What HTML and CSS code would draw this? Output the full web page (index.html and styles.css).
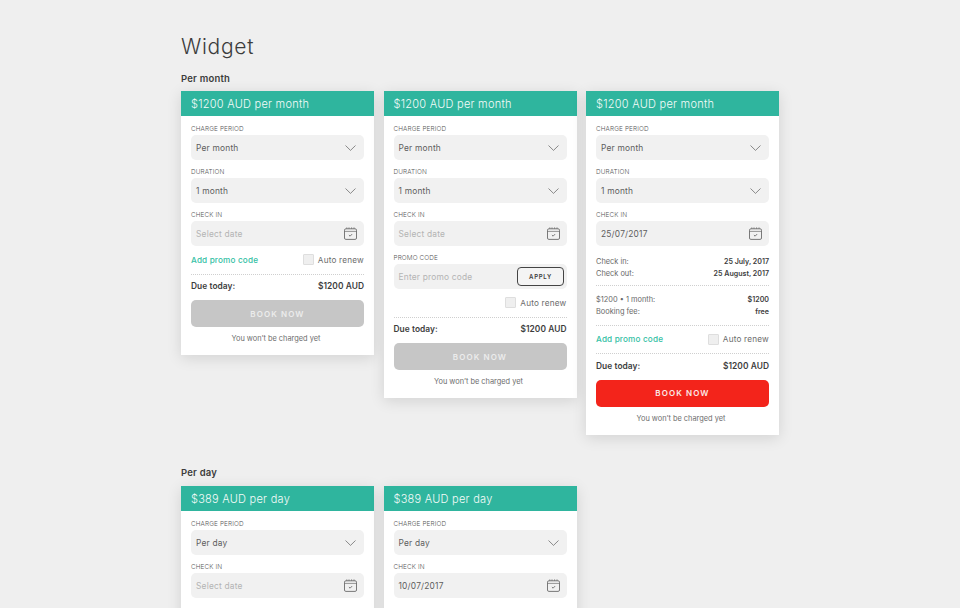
FILE: index.html
```html
<!DOCTYPE html>
<html lang="en">
<head>
<meta charset="utf-8">
<title>Widget</title>
<link rel="stylesheet" href="styles.css">
</head>
<body>
<svg class="defs" width="0" height="0">
  <symbol id="chev" viewBox="0 0 11 6"><path d="M.5.5 5.5 5.4 10.5.5" fill="none" stroke="#6f6f6f" stroke-width=".8"/></symbol>
  <symbol id="cal" viewBox="0 0 13 13"><g fill="none" stroke="#6b6b6b" stroke-width=".9"><rect x=".5" y="1.8" width="12" height="10.6" rx="1.4"/><path d="M.5 4.4h12M2.8.3v1.6M5 .3v1.6M7.6.3v1.6M10 .3v1.6" stroke-width=".7"/><path d="M4.9 8l1.2 1.2 2-2.1"/></g></symbol>
</svg>
<main class="page">
  <h1 class="title">Widget</h1>
  <h2 class="section">Per month</h2>
  <div class="row">
    <article class="card">
      <header class="head">$1200 AUD per month</header>
      <div class="body">
        <div class="label">CHARGE PERIOD</div>
        <div class="field"><span>Per month</span><svg class="chev"><use href="#chev"/></svg></div>
        <div class="label">DURATION</div>
        <div class="field"><span>1 month</span><svg class="chev"><use href="#chev"/></svg></div>
        <div class="label">CHECK IN</div>
        <div class="field hint"><span>Select date</span><svg class="cal"><use href="#cal"/></svg></div>
        <div class="opts"><a class="promo">Add promo code</a><label class="renew"><i class="box"></i>Auto renew</label></div>
        <div class="due"><span>Due today:</span><span>$1200 AUD</span></div>
        <button class="book off">BOOK NOW</button>
        <p class="note">You won’t be charged yet</p>
      </div>
    </article>
    <article class="card">
      <header class="head">$1200 AUD per month</header>
      <div class="body">
        <div class="label">CHARGE PERIOD</div>
        <div class="field"><span>Per month</span><svg class="chev"><use href="#chev"/></svg></div>
        <div class="label">DURATION</div>
        <div class="field"><span>1 month</span><svg class="chev"><use href="#chev"/></svg></div>
        <div class="label">CHECK IN</div>
        <div class="field hint"><span>Select date</span><svg class="cal"><use href="#cal"/></svg></div>
        <div class="label">PROMO CODE</div>
        <div class="field hint with-btn"><span>Enter promo code</span><button class="apply">APPLY</button></div>
        <div class="opts end"><label class="renew"><i class="box"></i>Auto renew</label></div>
        <div class="due"><span>Due today:</span><span>$1200 AUD</span></div>
        <button class="book off">BOOK NOW</button>
        <p class="note">You won’t be charged yet</p>
      </div>
    </article>
    <article class="card">
      <header class="head">$1200 AUD per month</header>
      <div class="body">
        <div class="label">CHARGE PERIOD</div>
        <div class="field"><span>Per month</span><svg class="chev"><use href="#chev"/></svg></div>
        <div class="label">DURATION</div>
        <div class="field"><span>1 month</span><svg class="chev"><use href="#chev"/></svg></div>
        <div class="label">CHECK IN</div>
        <div class="field"><span>25/07/2017</span><svg class="cal"><use href="#cal"/></svg></div>
        <div class="lines first">
          <div class="line"><span>Check in:</span><b>25 July, 2017</b></div>
          <div class="line"><span>Check out:</span><b>25 August, 2017</b></div>
        </div>
        <div class="lines">
          <div class="line"><span>$1200 • 1 month:</span><b>$1200</b></div>
          <div class="line"><span>Booking fee:</span><b>free</b></div>
        </div>
        <div class="opts"><a class="promo">Add promo code</a><label class="renew"><i class="box"></i>Auto renew</label></div>
        <div class="due"><span>Due today:</span><span>$1200 AUD</span></div>
        <button class="book">BOOK NOW</button>
        <p class="note">You won’t be charged yet</p>
      </div>
    </article>
  </div>
  <h2 class="section second">Per day</h2>
  <div class="row">
    <article class="card tall">
      <header class="head">$389 AUD per day</header>
      <div class="body">
        <div class="label">CHARGE PERIOD</div>
        <div class="field"><span>Per day</span><svg class="chev"><use href="#chev"/></svg></div>
        <div class="label">CHECK IN</div>
        <div class="field hint"><span>Select date</span><svg class="cal"><use href="#cal"/></svg></div>
      </div>
    </article>
    <article class="card tall">
      <header class="head">$389 AUD per day</header>
      <div class="body">
        <div class="label">CHARGE PERIOD</div>
        <div class="field"><span>Per day</span><svg class="chev"><use href="#chev"/></svg></div>
        <div class="label">CHECK IN</div>
        <div class="field"><span>10/07/2017</span><svg class="cal"><use href="#cal"/></svg></div>
      </div>
    </article>
  </div>
</main>
</body>
</html>
```
FILE: styles.css
```css
* { box-sizing: border-box; }
html, body { margin: 0; height: 608px; overflow: hidden; }
body { background: #efefef; font-family: Inter, "Open Sans", sans-serif; color: #3d3d3d; }
.defs { position: absolute; }
.page { padding: 34px 0 0 181px; }
.title { margin: 0; font-size: 21px; line-height: 26px; font-weight: 300; letter-spacing: .7px; color: #3c3c3c; }
.section { margin: 10px 0 0; height: 21px; font-size: 9.5px; line-height: 18px; font-weight: 600; letter-spacing: .2px; color: #3c3c3c; }
.section.second { margin-top: 29.5px; height: 22px; }
.row { display: flex; align-items: flex-start; gap: 9.5px; }
.card { width: 193px; flex: none; background: #fff; box-shadow: 0 3px 14px rgba(0,0,0,.12); }
.card.tall { min-height: 160px; }
.head { height: 25px; padding-left: 10px; background: #2fb59e; color: #f4fbf9; font-size: 11px; line-height: 26px; font-weight: 300; letter-spacing: .25px; }
.body { padding: 8px 10px 12px; }
.label { height: 11px; font-size: 6.4px; line-height: 10px; letter-spacing: .12px; font-weight: 300; color: #555; }
.field { display: flex; align-items: center; justify-content: space-between; height: 25px; margin-bottom: 7px; padding: 0 7px 0 5px; background: #f1f1f1; border-radius: 5px; font-size: 8.4px; font-weight: 400; letter-spacing: .2px; color: #5d5d5d; }
.field.hint { color: #b4b4b4; }
.field.with-btn { padding-right: 2.5px; }
.chev { width: 11px; height: 6px; margin: 1px 1px 0 0; }
.cal { width: 13px; height: 13px; }
.apply { width: 47px; height: 19.5px; padding: 0; background: #f4f4f4; border: 1px solid #444; border-radius: 4px; font-family: inherit; font-size: 6px; font-weight: 600; letter-spacing: .7px; color: #3d3d3d; }
.opts { display: flex; align-items: center; justify-content: space-between; height: 21px; padding-bottom: 8px; font-size: 8.2px; letter-spacing: .2px; }
.opts.end { justify-content: flex-end; }
.promo { color: #35bfa5; font-weight: 500; letter-spacing: .15px; }
.renew { display: flex; align-items: center; gap: 4px; color: #6b6b6b; font-weight: 400; }
.box { width: 11px; height: 11px; background: #efefef; border: 1px solid #dedede; border-radius: 1px; }
.due { display: flex; justify-content: space-between; align-items: center; height: 26px; padding-bottom: 3px; border-top: 1px dotted #cfcfcf; font-size: 8.4px; font-weight: 600; letter-spacing: .06px; color: #3d3d3d; }
.book { display: block; width: 100%; height: 27px; padding: 0; border: 0; border-radius: 5px; background: #f3241b; color: #fbe9e7; font-family: inherit; font-size: 8px; font-weight: 600; letter-spacing: 1.1px; }
.book.off { background: #c6c6c6; color: #ececec; }
.note { margin: 7px 0 0; padding-right: 3px; font-size: 7.4px; line-height: 9px; text-align: center; color: #6e6e6e; }
.lines { padding: 7px 0 8px; border-top: 1px dotted #cfcfcf; }
.lines.first { margin-top: -1px; padding: 3px 0 6px; border-top: 0; }
.line { display: flex; justify-content: space-between; align-items: center; height: 12px; font-size: 7.4px; color: #6a6a6a; }
.line b { font-size: 7.1px; font-weight: 600; color: #3d3d3d; }
.lines + .opts { height: 28px; padding-bottom: 1px; border-top: 1px dotted #cfcfcf; }
.lines + .opts + .due { height: 26.5px; padding-bottom: 1px; }
```
